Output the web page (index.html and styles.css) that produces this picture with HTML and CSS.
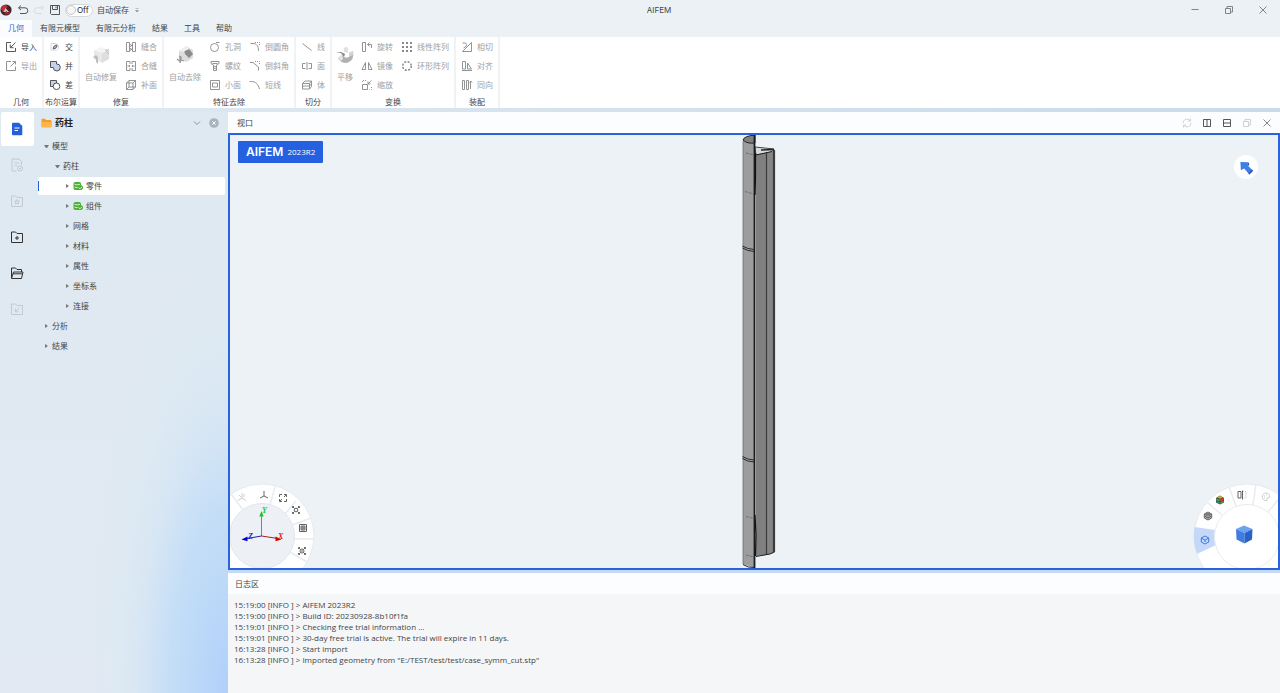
FILE: index.html
```html
<!DOCTYPE html>
<html lang="zh-CN">
<head>
<meta charset="utf-8">
<title>AIFEM</title>
<link rel="stylesheet" href="styles.css">
</head>
<body>
<header class="titlebar">
  <div class="quick">
    <svg class="logo" viewBox="0 0 12 12"><circle cx="6" cy="6" r="5.6" fill="#4b2024"/><path d="M1 5A5 5 0 0 1 6 1L7.500 3 5 5 3.500 8.500Z" fill="#c0303c"/><path d="M5.500 4 9 8H3.500Z" fill="#d9c9cb"/><path d="M6 6.500 8 9 10.500 6.500 9 10 5 10.500Z" fill="#a52a35"/></svg>
    <button class="tool" aria-label="撤销"><svg class="ic" viewBox="0 0 12 12"><path d="M4 1.500 1.500 3.800 4 6M1.800 3.800H8A2.800 2.800 0 0 1 8 9.500H3"/></svg></button>
    <button class="tool faint" aria-label="重做"><svg class="ic" viewBox="0 0 12 12"><path d="M8 1.500 10.500 3.800 8 6M10.200 3.800H4A2.800 2.800 0 0 0 4 9.500H9"/></svg></button>
    <button class="tool" aria-label="保存"><svg class="ic" viewBox="0 0 12 12"><path d="M1.500 1.500H10.500V10.500H2.500L1.500 9.500ZM3.500 1.500V5.500H8.500V1.500M7 2.500V4.300"/></svg></button>
    <label class="switch"><input type="checkbox" aria-label="自动保存"><span>Off</span></label>
    <span>自动保存</span>
    <button class="more" aria-label="更多"><svg viewBox="0 0 6 6"><path d="M1.500 1.500H4.500M1.500 3.500H4.500L3 5Z" fill="#888" stroke="#888" stroke-width=".5"/></svg></button>
  </div>
  <h1 class="title">AIFEM</h1>
  <div class="window-controls">
    <button aria-label="最小化"><svg class="ic" viewBox="0 0 12 12"><path d="M2.500 5.500H9.500"/></svg></button>
    <button aria-label="还原"><svg class="ic" viewBox="0 0 12 12"><path d="M2.500 4.500H7.500V9.500H2.500ZM4 4.500V2.500H9.500V8H7.500"/></svg></button>
    <button aria-label="关闭"><svg class="ic" viewBox="0 0 12 12"><path d="M2.500 2.500 9.500 9.500M9.500 2.500 2.500 9.500"/></svg></button>
  </div>
</header>

<nav class="tabs">
  <button class="tab active">几何</button><button class="tab">有限元模型</button><button class="tab">有限元分析</button><button class="tab">结果</button><button class="tab">工具</button><button class="tab">帮助</button>
</nav>

<section class="ribbon">
  <div class="group">
    <div class="tools">
      <div class="col">
        <button class="cmd on"><svg class="ic" viewBox="0 0 12 12"><path d="M6 1.500H1.500V10.500H10.500V7M10.500 1.500 5.500 6.500M5.300 3.500V6.700H8.500"/></svg>导入</button>
        <button class="cmd"><svg class="ic" viewBox="0 0 12 12"><path d="M6 1.500H1.500V10.500H10.500V6.500M5.500 6.500 10.300 1.700M7.500 1.500H10.500V4.500"/></svg>导出</button>
      </div>
    </div>
    <div class="caption">几何</div>
  </div>
  <div class="group">
    <div class="tools">
      <div class="col">
        <button class="cmd on"><svg class="ic" viewBox="0 0 12 12"><path d="M2 2.500H7.500A3.500 3.500 0 1 1 4.500 9H2Z" stroke="#ccd2dc"/><path d="M4.200 7.800C4.200 5.500 5.500 4.200 8 4.200 8 6.500 6.700 7.800 4.200 7.800Z" fill="#aebfdd"/></svg>交</button>
        <button class="cmd on"><svg class="ic" viewBox="0 0 12 12"><path d="M1.500 1.500H7.500V4A3.500 3.500 0 1 1 4.300 7.500H1.500Z" fill="#c4d2ee"/></svg>并</button>
        <button class="cmd on"><svg class="ic" viewBox="0 0 12 12"><path d="M1.500 1.500H7.500V4A3.500 3.500 0 0 0 4.300 7.500H1.500Z" fill="#c4d2ee"/><circle cx="7.500" cy="7.300" r="3.300" fill="#fff"/></svg>差</button>
      </div>
    </div>
    <div class="caption">布尔运算</div>
  </div>
  <div class="group">
    <div class="tools">
      <button class="big"><svg viewBox="0 0 20 20"><path d="M3 5 10 2 18 5 11 8Z" fill="#f4f4f4"/><path d="M3 5 11 8V18L3 14Z" fill="#e8e8e8"/><path d="M11 8 18 5V14L11 18Z" fill="#dedede"/><path d="M2 12 5 10 7 12V19L5 17V14Z" fill="#bdbdbd"/><path d="M15 6 18 9M14 5 18 5" stroke="#bbb"/></svg>自动修复</button>
      <div class="col">
        <button class="cmd"><svg class="ic" viewBox="0 0 12 12"><path d="M1.500 1.500H4.500V10.500H1.500ZM7.500 1.500H10.500V10.500H7.500ZM4.500 3 7.500 5M4.500 6 7.500 4M4.500 7 7.500 9M4.500 10 7.500 7.500"/></svg>缝合</button>
        <button class="cmd"><svg class="ic" viewBox="0 0 12 12"><path d="M5 4V1.500H1.500V10.500H5V8M7 4V1.500H10.500V10.500H7V8M2.500 6H5M7 6H9.500M4 5 5 6 4 7M8 5 7 6 8 7"/></svg>合缝</button>
        <button class="cmd"><svg class="ic" viewBox="0 0 12 12"><path d="M1.500 4H8V10.500H1.500ZM1.500 4 4 1.500H10.500V8L8 10.500M8 4 10.500 1.500M4 1.500V8H10.500M4 8 1.500 10.500"/></svg>补面</button>
      </div>
    </div>
    <div class="caption">修复</div>
  </div>
  <div class="group">
    <div class="tools">
      <button class="big"><svg viewBox="0 0 20 20"><path d="M4 6 11 1 18 5 18 13 11 17 4 13Z" fill="#dcdcdc"/><path d="M9 5 14 4 18 9 14 13 10 9Z" fill="#8a8a8a"/><path d="M4 6 11 1 14 4 8 7Z" fill="#f0f0f0"/><path d="M4 11 6 12 6 15 9 16M5 12V18M2 14 6 17" stroke="#959595" stroke-width="1.200" fill="none"/></svg>自动去除</button>
      <div class="col">
        <button class="cmd"><svg class="ic" viewBox="0 0 12 12"><circle cx="5.500" cy="6.500" r="4"/><path d="M7 1.500H10.500"/></svg>孔洞</button>
        <button class="cmd"><svg class="ic" viewBox="0 0 12 12"><path d="M2 1.500H10V3.500L7.500 5V10.500H4.500V5L2 3.500ZM4.500 6 7.500 7M4.500 8 7.500 9M3.500 3.500H8.500"/></svg>螺纹</button>
        <button class="cmd"><svg class="ic" viewBox="0 0 12 12"><path d="M1.500 1.500H10.500V10.500H1.500ZM3.500 4H8.500V8H3.500Z"/></svg>小面</button>
      </div>
      <div class="col">
        <button class="cmd"><svg class="ic" viewBox="0 0 12 12"><path d="M1.500 2.500H4C7.500 2.500 9.500 5 9.500 10"/><path d="M6 1.500H10.500V5" stroke-dasharray="1 1"/></svg>倒圆角</button>
        <button class="cmd"><svg class="ic" viewBox="0 0 12 12"><path d="M1 2.500H4L9.500 7V10.500"/><path d="M6 1.500H10.500V5" stroke-dasharray="1 1"/></svg>倒斜角</button>
        <button class="cmd"><svg class="ic" viewBox="0 0 12 12"><path d="M.5 2.500H2.500C6.500 2.500 9 5 10.500 10"/></svg>短线</button>
      </div>
    </div>
    <div class="caption">特征去除</div>
  </div>
  <div class="group">
    <div class="tools">
      <div class="col">
        <button class="cmd"><svg class="ic" viewBox="0 0 12 12"><path d="M1.500 2.500 10.500 9.500"/></svg>线</button>
        <button class="cmd"><svg class="ic" viewBox="0 0 12 12"><path d="M4.500 3.500H1.500V8.500H4.500M7.500 3.500H10.500V8.500H7.500M6 2V10"/></svg>面</button>
        <button class="cmd"><svg class="ic" viewBox="0 0 12 12"><path d="M1.500 4.500 4 2H10.500L8.500 4.500ZM1.500 4.500V10H8.500V4.500M8.500 10 10.500 7.500V2M1.500 7H8.500L10.500 4.800"/></svg>体</button>
      </div>
    </div>
    <div class="caption">切分</div>
  </div>
  <div class="group">
    <div class="tools">
      <button class="big"><svg viewBox="0 0 20 20"><path d="M9 3Q11 1 13 3V8L9 7Z" fill="#e0e0e0"/><path d="M14 8 18 6Q20 15 12 18 5 18 3 13L7 10Q10 14 14 12Z" fill="#b0b0b0"/><path d="M14 8 18 6 18 10 14 12Z" fill="#d4d4d4"/><path d="M1 7 6 8 9 12 10 9 6 7Z" fill="#858585"/><path d="M3 13 7 10 8 14 6 16Z" fill="#e4e4e4"/></svg>平移</button>
      <div class="col">
        <button class="cmd"><svg class="ic" viewBox="0 0 12 12"><path d="M1.500 1.500H4.500V10.500H1.500ZM6.500 3.500H10.500V7M8.500 1.500 6.500 3.500 8.500 5.500"/></svg>旋转</button>
        <button class="cmd"><svg class="ic" viewBox="0 0 12 12"><path d="M1 9.500 4.500 2.500V9.500ZM7.500 2.500V9.500H11Z"/></svg>镜像</button>
        <button class="cmd"><svg class="ic" viewBox="0 0 12 12"><path d="M1.500 5.500H6.500V10.500H1.500Z"/><path d="M5 1.500H1.500V3M10.500 8V10.500H8.500" stroke-dasharray="1 1"/><path d="M10.500 1.500 7 5M7 2.500V5H9.500"/></svg>缩放</button>
      </div>
      <div class="col">
        <button class="cmd"><svg class="ic dots" viewBox="0 0 12 12"><path d="M1 2H11M1 6H11M1 10H11"/></svg>线性阵列</button>
        <button class="cmd"><svg class="ic ring" viewBox="0 0 12 12"><circle cx="6" cy="6" r="4.300"/></svg>环形阵列</button>
      </div>
    </div>
    <div class="caption">变换</div>
  </div>
  <div class="group">
    <div class="tools">
      <div class="col">
        <button class="cmd"><svg class="ic" viewBox="0 0 12 12"><path d="M1.500 10.500 10.500 1.500V10.500ZM1.500 2H4.500Q6.500 3.500 5 5.500L2.500 7"/></svg>相切</button>
        <button class="cmd"><svg class="ic" viewBox="0 0 12 12"><path d="M1.500 1.500H4.500V9H1.500ZM6.500 3V9H10.500ZM1 10.500H11"/></svg>对齐</button>
        <button class="cmd"><svg class="ic" viewBox="0 0 12 12"><path d="M1.500 1.500H3.500V10.500H1.500ZM5.500 1.500H7.500V10.500H5.500ZM9.500 10V3M8.500 3.500 10 2 11 3.500"/></svg>同向</button>
      </div>
    </div>
    <div class="caption">装配</div>
  </div>
</section>

<main class="workspace">
  <aside class="side">
    <nav class="rail">
      <button class="active" aria-label="模型"><svg viewBox="0 0 14 14"><path d="M2 1.500Q2 .8 3 .8H9L12.300 4V12.200Q12.300 13.200 11.300 13.200H3Q2 13.200 2 12.200Z" fill="#2560dc"/><path d="M4.500 6H9.500M4.500 8.500H8" stroke="#fff" stroke-width="1.200"/></svg></button>
      <button class="faint" aria-label="报告"><svg class="ic14" viewBox="0 0 14 14"><path d="M6.500 13H2V1H9L11.500 3.500V7M4.500 5H9M4.500 7.500H7"/><circle cx="10" cy="10.500" r="2.500"/><path d="M9 10.500H11"/></svg></button>
      <button class="faint" aria-label="收藏"><svg class="ic14" viewBox="0 0 14 14"><path d="M1.500 2H5.500L7 3.500H12.500V12.500H1.500Z"/><path d="M7 5.500 7.700 7.200H9.500L8.100 8.300 8.600 10 7 9 5.400 10 5.900 8.300 4.500 7.200H6.300Z"/></svg></button>
      <button aria-label="新建"><svg class="ic14" viewBox="0 0 14 14"><path d="M1.500 2H5.500L7 3.500H12.500V12.500H1.500ZM7 6V10M5 8H9"/></svg></button>
      <button aria-label="打开"><svg class="ic14" viewBox="0 0 14 14"><path d="M1.500 12V2H5.500L7 3.500H11.500V6M1.500 12.500 3.500 6H13L11.500 12.500ZM3 7.800H12.500"/></svg></button>
      <button class="faint" aria-label="导入项目"><svg class="ic14" viewBox="0 0 14 14"><path d="M1.500 2H5.500L7 3.500H12.500V12.500H1.500ZM9.500 5.500 5.500 9.500M5.500 6.800V9.800H8.500"/></svg></button>
    </nav>
    <section class="explorer">
      <header class="explorer-head">
        <svg class="folder" viewBox="0 0 11 10"><path d="M.5 1.500Q.5 .8 1.200 .8H4L5 2H9.500Q10.500 2 10.500 3V8.500Q10.500 9.300 9.700 9.300H1.300Q.5 9.300 .5 8.500Z" fill="#f39c28"/><path d="M.5 4H10.500V8.500Q10.500 9.300 9.700 9.300H1.300Q.5 9.300 .5 8.500Z" fill="#ffb64a"/></svg>
        <h2>药柱</h2>
        <button aria-label="展开"><svg class="ic" viewBox="0 0 12 12"><path d="M3 4.500 6 7.500 9 4.500"/></svg></button>
        <button aria-label="关闭"><svg viewBox="0 0 12 12"><circle cx="6" cy="6" r="4.800" fill="#a9b3be"/><path d="M4.300 4.300 7.700 7.700M7.700 4.300 4.300 7.700" stroke="#fff"/></svg></button>
      </header>
      <ul class="tree">
        <li class="l1 open">模型</li>
        <li class="l2 open">药柱</li>
        <li class="l3 selected"><svg class="part" viewBox="0 0 10 10"><path d="M.5 2.500Q.5 1 2.500 1H6Q8 1 8 2.500V4L10 5.500V7.500L8.500 9H3Q.5 9 .5 7.500Z" fill="#4fb13a"/><path d="M1.500 3.300Q4 4.500 7 3.300M1.500 6Q3 7 4.500 6.500M5.500 6.500 7 7.800 9 5.800" stroke="#e0f5da" fill="none" stroke-width=".9"/></svg>零件</li>
        <li class="l3"><svg class="part" viewBox="0 0 10 10"><path d="M.5 2.500Q.5 1 2.500 1H6Q8 1 8 2.500V4L10 5.500V7.500L8.500 9H3Q.5 9 .5 7.500Z" fill="#4fb13a"/><path d="M1.500 3.300Q4 4.500 7 3.300M1.500 6Q3 7 4.500 6.500M5.500 6.500 7 7.800 9 5.800" stroke="#e0f5da" fill="none" stroke-width=".9"/></svg>组件</li>
        <li class="l3">网格</li>
        <li class="l3">材料</li>
        <li class="l3">属性</li>
        <li class="l3">坐标系</li>
        <li class="l3">连接</li>
        <li class="l1">分析</li>
        <li class="l1">结果</li>
      </ul>
    </section>
  </aside>

  <div class="content">
    <section class="view">
      <header class="panel-head">
        <h2>视口</h2>
        <button class="faint" aria-label="刷新"><svg class="ic" viewBox="0 0 12 12"><path d="M2 6A4 4 0 0 1 9 3.500M10 6A4 4 0 0 1 3 8.500M9.500 1.500V4H7M2.500 10.500V8H5"/></svg></button>
        <button class="dark" aria-label="左右分割"><svg class="ic" viewBox="0 0 12 12"><path d="M2.500 2.500H9.500V9.500H2.500ZM6 2.500V9.500"/></svg></button>
        <button class="dark" aria-label="上下分割"><svg class="ic" viewBox="0 0 12 12"><path d="M2.500 2.500H9.500V9.500H2.500ZM2.500 6H9.500"/></svg></button>
        <button class="faint" aria-label="浮动"><svg class="ic" viewBox="0 0 12 12"><path d="M2.500 4.500H7.500V9.500H2.500ZM4 4.500V2.500H9.500V8H7.500"/></svg></button>
        <button aria-label="关闭视口"><svg class="ic" viewBox="0 0 12 12"><path d="M2.500 2.500 9.500 9.500M9.500 2.500 2.500 9.500"/></svg></button>
      </header>
      <div class="canvas">
        <svg class="model" viewBox="731 135 46 433">
          <path d="M743 140Q747 144 755 143V568L743 564Z" fill="#9d9d9d"/>
          <path d="M743 140Q744 136 755 135V143Q747 144 743 140Z" fill="#808080" stroke="#222"/>
          <path d="M755 147 774 149 772 152 756 155Z" fill="#d8dadb" stroke="#444"/>
          <path d="M761 150 774 149.500" stroke="#222" stroke-width="1.500"/>
          <path d="M756 155 766 153V555L756 556Z" fill="#808080"/>
          <path d="M767 153 773 151V553L767 555Z" fill="#868686"/>
          <path d="M766.500 153V555" stroke="#3a3a3a" stroke-width="1.200"/>
          <path d="M774 150V552" stroke="#3c3c3c" stroke-width="2.200"/>
          <path d="M756 155 772 151.500M756 556.500 770 554 774.500 552" stroke="#222"/>
          <path d="M754.500 135V568" stroke="#1c1c1c" stroke-width="1.800"/>
          <path d="M755.500 153V178L755 195M755 515 756 535 755.500 556" stroke="#111" stroke-width="1.200"/>
          <path d="M743 141V564" stroke="#666" stroke-width=".7"/>
          <path d="M743 564.500Q748 568 754.500 567.500" stroke="#222"/>
          <path d="M742.500 246Q747 249 754 249.500M742.500 248Q747 251 754 251.500M742.500 456.500Q747 459.500 754 460M742.500 458.500Q747 461.500 754 462" stroke="#2a2a2a"/>
          <path d="M746 153 754 155M745 191.500 754 194M746 516.500 754 518.500M746 555 754 557" stroke="#555" stroke-width=".6" stroke-dasharray="3 1"/>
        </svg>
        <div class="badge"><b>AIFEM</b><span>2023R2</span></div>
        <button class="pointer" aria-label="选择"><svg viewBox="0 0 16 16"><path d="M1.500 2 10 2.500 8.500 5 15 11.500 11 15.500 5.500 9 2 11Z" fill="#3f7fe2"/><path d="M8.500 5 10 2.500 11 4.500 10 6.500ZM15 11.500 11 15.500 10 14 13.800 10.200Z" fill="#2456bd"/></svg></button>

        <div class="dial dial-left">
          <svg class="disc" viewBox="230 482 86 86">
            <circle cx="262" cy="536" r="52" fill="#fff" stroke="#e6eaee"/>
            <path d="M231 494 243 510M275.500 485 270 505M296 501 285 514M311 518 292 525M314 539H294M307 562 290 552" stroke="#e8ebf0" stroke-width="1.500"/>
            <circle cx="262" cy="536" r="32.500" fill="#edf1f5" stroke="#e2e7ed"/>
            <path d="M261.500 536V516" stroke="#22c32e"/><path d="M261.500 511 259.300 516.500H263.700Z" fill="#16c522"/>
            <path d="M261.500 536 278 538.500" stroke="#a52020"/><path d="M281.500 539.500 275.500 536.500V541.200Z" fill="#d40000"/>
            <path d="M261.500 536 247 538.500" stroke="#2020a0"/><path d="M241.500 539.500 247.500 536.500V541.200Z" fill="#0000d0"/>
            <g class="axis"><text x="262" y="513" fill="#22c32e">Y</text><text x="278" y="539" fill="#e02020">X</text><text x="248" y="539" fill="#2020d0">Z</text></g>
          </svg>
          <button class="d1 faint" aria-label="坐标轴"><svg class="ic" viewBox="0 0 12 12"><path d="M6 2V7L2 9.500M6 7 10 9.500M3 4 5 6M8 3V6"/></svg></button>
          <button class="d2" aria-label="全局坐标"><svg class="ic" viewBox="0 0 12 12"><path d="M6 2V7L2 9M6 7 10 9"/></svg></button>
          <button class="d3" aria-label="适应窗口"><svg class="ic" viewBox="0 0 12 12"><path d="M2.500 5V2.500H5M7 2.500H9.500V5M9.500 7V9.500H7M5 9.500H2.500V7M7 5 9 3M3 9 5 7"/></svg></button>
          <button class="d4" aria-label="框选缩放"><svg class="ic" viewBox="0 0 12 12"><path d="M2.500 4V2.500H4M8 2.500H9.500V4M9.500 8V9.500H8M4 9.500H2.500V8M3 3 4.500 4.500M7.500 7.500 9 9M9 3 7.500 4.500M4.500 7.500 3 9"/><circle cx="6" cy="6" r="1.800"/></svg></button>
          <button class="d5" aria-label="网格"><svg class="ic" viewBox="0 0 12 12"><path d="M2.500 2.500H9.500V9.500H2.500ZM5 2.500V9.500M7 2.500V9.500M2.500 5H9.500M2.500 7H9.500"/></svg></button>
          <button class="d6" aria-label="聚焦"><svg class="ic" viewBox="0 0 12 12"><path d="M2.500 4V2.500H4M8 2.500H9.500V4M9.500 8V9.500H8M4 9.500H2.500V8M3 3 4.500 4.500M7.500 7.500 9 9M9 3 7.500 4.500M4.500 7.500 3 9M5 6H7"/><circle cx="6" cy="6" r="2"/></svg></button>
        </div>

        <div class="dial dial-right">
          <svg class="disc" viewBox="1192 482 86 86">
            <circle cx="1247" cy="537" r="53" fill="#fff" stroke="#e6eaee"/>
            <path d="M1194.500 527 1215 530Q1213 538 1216 545L1197 554Q1192 541 1194.500 527Z" fill="#c5d8f8"/>
            <path d="M1207 502 1222 515M1229 487 1236 506M1256 484 1253 505M1278 500 1268 512" stroke="#e8ebf0" stroke-width="1.500"/>
            <circle cx="1247" cy="537" r="32.500" fill="#fff" stroke="#e8ebf0"/>
            <path d="M1236 529 1244 525.500 1252.500 529 1244.500 533Z" fill="#6fa2ee"/>
            <path d="M1236 529 1244.500 533V543.500L1236.500 539.500Z" fill="#3f7ce0"/>
            <path d="M1252.500 529 1244.500 533V543.500L1252 539.500Z" fill="#2a62cb"/>
          </svg>
          <button class="r1 blue" aria-label="实体"><svg class="ic" viewBox="0 0 12 12"><path d="M6 2 9.700 4V8L6 10 2.300 8V4ZM2.300 4 6 6.200 9.700 4M6 6.200V8"/></svg></button>
          <button class="r2" aria-label="网格显示"><svg class="ic" viewBox="0 0 12 12"><path d="M6 2 9.700 4V8L6 10 2.300 8V4ZM2.300 4 6 6 9.700 4M6 6V10M4 3 8 5V9M8 3 4 5V9M2.300 6 6 8 9.700 6"/></svg></button>
          <button class="r3" aria-label="颜色"><svg viewBox="0 0 12 12"><path d="M6 1.500 10 4V8.500L6 10.500 2 8.500V4Z" fill="#3e4a35"/><path d="M6 2 8.500 3.300 6 4.800 3.500 3.300Z" fill="#e2b52c"/><path d="M6.300 5 9.700 3.800V6L6.300 7.800Z" fill="#dd3b2e"/><path d="M2.300 4.300 5.700 5.500V7.500L2.300 6.500Z" fill="#53a53f"/><path d="M2.300 7 5.700 8.200V9.900L2.300 8.300Z" fill="#2d7fc4"/><path d="M6.300 8.200 9.700 6.800V8.200L6.300 9.900Z" fill="#54a542"/></svg></button>
          <button class="r4" aria-label="剖切"><svg class="ic" viewBox="0 0 12 12"><path d="M5 2.500H2V9H5ZM6.500 1.500V10.500"/><path d="M7 2.500H10V9H7" stroke="#bbb" stroke-dasharray="1 1"/></svg></button>
          <button class="r5 faint" aria-label="调色板"><svg class="ic" viewBox="0 0 12 12"><path d="M7 9.500A3.800 3.800 0 1 1 9.800 6.200L7 7.200Z"/><path d="M4 5H5M6 4H7M4 7H5"/></svg></button>
        </div>
      </div>
    </section>

    <section class="log">
      <header class="panel-head"><h2>日志区</h2></header>
      <div class="log-body">
        <p>15:19:00 [INFO ] &gt; AIFEM 2023R2</p>
        <p>15:19:00 [INFO ] &gt; Build ID: 20230928-8b10f1fa</p>
        <p>15:19:01 [INFO ] &gt; Checking free trial information ...</p>
        <p>15:19:01 [INFO ] &gt; 30-day free trial is active. The trial will expire in 11 days.</p>
        <p>16:13:28 [INFO ] &gt; Start import</p>
        <p>16:13:28 [INFO ] &gt; Imported geometry from "E:/TEST/test/test/case_symm_cut.stp"</p>
      </div>
    </section>
  </div>
</main>
</body>
</html>
```
FILE: styles.css
```css
*, *::before { box-sizing: border-box; }

body {
  margin: 0;
  height: 100vh;
  display: flex;
  flex-direction: column;
  overflow: hidden;
  background: #ecf1f5;
  color: #444;
  font: 8px/12px Inter, "Noto Sans CJK SC", sans-serif;
}

h1, h2, p, ul { margin: 0; padding: 0; font-size: inherit; font-weight: 400; }
button { margin: 0; padding: 0; border: 0; background: none; color: inherit; font: inherit; }
svg { display: block; flex: none; }

.ic { width: 12px; height: 12px; fill: none; stroke: currentColor; stroke-width: .9; }
.ic14 { fill: none; stroke: currentColor; }
.faint { color: #c3c9d0; }

/* Title bar */
.titlebar { display: flex; align-items: center; height: 20px; }
.quick { display: flex; align-items: center; width: 140px; color: #444; }
.logo { width: 12px; height: 12px; margin-right: 5px; }
.tool { width: 12px; margin-right: 4px; }
.tool.faint { color: #d4dade; }
.switch {
  display: flex;
  align-items: center;
  gap: 1px;
  width: 28px;
  height: 13px;
  margin-right: 4px;
  border: 1px solid #d5d8db;
  border-radius: 7px;
  background: #fff;
  color: #222;
}
.switch input {
  appearance: none;
  width: 10px;
  height: 10px;
  margin: 0;
  border: 1px solid #c8c8c8;
  border-radius: 50%;
  background: #f5f5f5;
}
.more { margin-left: 5px; }
.more svg { width: 6px; height: 6px; }
.title { flex: 1; text-align: center; }
.window-controls { display: flex; width: 102px; color: #777; }
.window-controls button { display: flex; justify-content: center; width: 34px; }

/* Tabs */
.tabs { display: flex; height: 17px; }
.tab { padding: 0 8px 1px; }
.tab.active { background: #fafcff; color: #2c64c8; }

/* Ribbon */
.ribbon { display: flex; background: #fff; }
.group { border-right: 2px solid #f0f2f4; }
.tools { display: flex; gap: 8px; height: 57px; padding: 0 5px; }
.cmd { display: flex; align-items: center; gap: 4px; height: 19px; color: #a0a0a0; }
.cmd.on { color: #444; }
.cmd .ic { color: #888; }
.cmd.on .ic { color: #444; }
.big { display: flex; flex-direction: column; align-items: center; gap: 6px; height: 48px; padding-top: 8px; color: #a0a0a0; }
.big svg { width: 20px; height: 20px; margin: 0 -2px; }
.caption { height: 14px; padding-top: 2px; text-align: center; }
.dots { stroke-width: 2; stroke-dasharray: 2 2; }
.ring { stroke-width: 1.5; stroke-dasharray: 2 1.4; }

/* Workspace */
.workspace {
  flex: 1;
  display: flex;
  min-height: 0;
  padding-top: 4px;
  background: linear-gradient(90deg, #dfe9f2, #c9dbe8);
}
.side {
  display: flex;
  width: 228px;
  background:
    radial-gradient(ellipse 140px 440px at 100% 100%, #b0d0fa, #bcd9f8 25%, #c5def7 42%, #d7e6f4 62%, #deeaf3 80%, #e0eaf300),
    linear-gradient(#dfe9f1, #e2e9f3);
}
.rail { display: flex; flex-direction: column; gap: 2px; width: 34px; padding-left: 1px; color: #333; }
.rail button { display: flex; align-items: center; justify-content: center; height: 34px; padding-right: 2px; }
.rail .active { border-radius: 2px; background: #fff; }
.rail svg { width: 14px; height: 14px; }

.explorer { flex: 1; padding: 0 3px 0 4px; }
.explorer-head { display: flex; align-items: center; gap: 3px; height: 25px; padding: 0 5px 3px 3px; color: #888; }
.explorer-head h2 { flex: 1; color: #222; font-size: 9px; font-weight: 700; }
.explorer-head button + button { margin-left: 2px; }
.explorer-head svg { width: 12px; height: 12px; }
.explorer-head .folder { width: 11px; height: 10px; }
.tree { list-style: none; }
.tree li { display: flex; align-items: center; height: 18px; margin-bottom: 2px; border-radius: 2px; color: #444; }
.tree li::before {
  content: "";
  width: 3px;
  margin-right: 4px;
  border: 2px solid transparent;
  border-left: 3px solid #777;
  border-right: 0;
}
.tree .open::before {
  width: 5px;
  margin-right: 3px;
  border: 2px solid transparent;
  border-top: 3px solid #777;
  border-bottom: 0;
}
.tree .l1 { padding-left: 7px; }
.tree .l1.open { padding-left: 6px; }
.tree .l2 { padding-left: 17px; }
.tree .l3 { padding-left: 28px; }
.tree .selected { background: linear-gradient(#2560dc, #2560dc) left center / 1px 10px no-repeat #fff; }
.part { width: 10px; height: 10px; margin-right: 3px; }

.content { flex: 1; display: flex; flex-direction: column; gap: 3px; min-width: 0; background: #c4d9f6; }
.panel-head { display: flex; align-items: center; height: 21px; padding: 0 3px 0 9px; background: #fbfdff; color: #777; }
.panel-head h2 { flex: 1; color: #444; }
.panel-head button { display: flex; justify-content: center; width: 20px; }
.panel-head .dark { color: #444; }
.panel-head .faint { color: #c8ccd2; }

.view { flex: 1; display: flex; flex-direction: column; min-height: 0; }
.canvas { position: relative; flex: 1; min-height: 0; border: 2px solid #2b63dc; background: #edf2f6; overflow: hidden; }
.model { width: 100%; height: 100%; fill: none; }

.badge {
  position: absolute;
  top: 6px;
  left: 8px;
  display: flex;
  align-items: center;
  gap: 4px;
  height: 22px;
  padding: 0 8px;
  border-radius: 1px;
  background: #2560e0;
  color: #fff;
}
.badge b { font-size: 12px; font-weight: 600; }
.badge span { font-family: "Open Sans", sans-serif; }
.pointer {
  position: absolute;
  top: 20px;
  right: 20px;
  display: flex;
  align-items: center;
  justify-content: center;
  width: 24px;
  height: 24px;
  border-radius: 50%;
  background: #fff;
}
.pointer svg { width: 15px; height: 15px; }

/* View dials, anchored to the lower corners */
.dial { position: absolute; bottom: 0; width: 86px; height: 86px; color: #555; }
.dial-left { left: 0; }
.dial-right { right: 0; }
.disc { width: 86px; height: 86px; }
.axis { font: italic 700 8px "Liberation Serif", serif; }
.dial button { position: absolute; width: 12px; height: 12px; }
.dial button svg { width: 12px; height: 12px; }
.dial .faint { color: #c4c8cc; }
.dial .blue { color: #2f6ee0; }
.d1 { left: 6px; top: 9px; }
.d2 { left: 28px; top: 7px; }
.d3 { left: 47px; top: 10px; }
.d4 { left: 60px; top: 22px; }
.d5 { left: 67px; top: 40px; }
.d6 { left: 66px; top: 63px; }
.r1 { left: 7px; top: 52px; }
.r2 { left: 10px; top: 28px; }
.r3 { left: 22px; top: 12px; }
.r4 { left: 44px; top: 7px; }
.r5 { left: 68px; top: 9px; }

/* Log */
.log { height: 120px; background: #f4f6f8; }
.log .panel-head { padding-left: 7px; }
.log-body { padding: 5px 6px; font-family: "Open Sans", sans-serif; line-height: 11px; }
```
